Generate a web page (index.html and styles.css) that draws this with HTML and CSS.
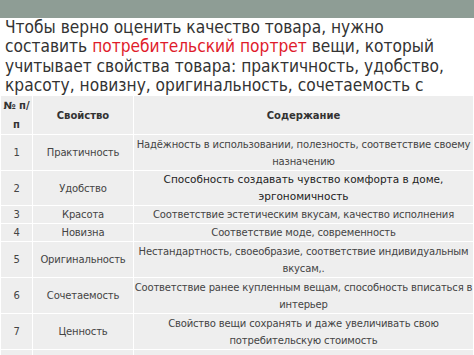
FILE: index.html
```html
<!DOCTYPE html>
<html lang="ru">
<head>
<meta charset="utf-8">
<link rel="stylesheet" href="styles.css">
</head>
<body>
<div class="topbar"></div>
<p class="intro">Чтобы верно оценить качество товара, нужно составить <span class="hl">потребительский портрет</span> вещи, который учитывает свойства товара: практичность, удобство, красоту, новизну, оригинальность, сочетаемость с</p>
<table class="props">
  <colgroup><col class="c1"><col class="c2"><col class="c3"></colgroup>
  <tr class="h37"><th class="num">№ п/ п</th><th>Свойство</th><th>Содержание</th></tr>
  <tr class="h36"><td>1</td><td>Практичность</td><td class="top">Надёжность в использовании, полезность, соответствие своему назначению</td></tr>
  <tr class="h35"><td>2</td><td>Удобство</td><td class="top dark">Способность создавать чувство комфорта в доме, эргономичность</td></tr>
  <tr class="h17"><td>3</td><td>Красота</td><td>Соответствие эстетическим вкусам, качество исполнения</td></tr>
  <tr class="h16"><td>4</td><td>Новизна</td><td>Соответствие моде, современность</td></tr>
  <tr class="h35"><td>5</td><td>Оригинальность</td><td class="top">Нестандартность, своеобразие, соответствие индивидуальным вкусам,.</td></tr>
  <tr class="h36"><td>6</td><td>Сочетаемость</td><td class="top">Соответствие ранее купленным вещам, способность вписаться в интерьер</td></tr>
  <tr class="h35"><td>7</td><td>Ценность</td><td class="top">Свойство вещи сохранять и даже увеличивать свою потребительскую стоимость</td></tr>
  <tr class="h35"><td>8</td><td>Качество</td><td class="top">Сохранять всех свойств покупки</td></tr>
</table>
</body>
</html>
```
FILE: styles.css
```css
html, body {
  margin: 0;
  padding: 0;
  background: #ffffff;
  overflow: hidden;
}
body {
  width: 474px;
  height: 355px;
  font-family: "DejaVu Sans Condensed", "DejaVu Sans", sans-serif;
}
.topbar {
  height: 18px;
  background: #8e9d95;
}
.intro {
  margin: 0;
  padding: 0 4px 0 5px;
  font-size: 17.2px;
  line-height: 19.25px;
  color: #333333;
  height: 77px;
  overflow: hidden;
}
.hl {
  color: #e01b2b;
}
.props {
  width: 474px;
  table-layout: fixed;
  border-collapse: collapse;
  background: #eeeeee;
  font-family: "DejaVu Sans", sans-serif;
  font-size: 10px;
  letter-spacing: -0.15px;
  color: #444444;
}
.c1 { width: 32px; }
.c2 { width: 101px; }
.props th, .props td {
  border: 1px solid #ffffff;
  padding: 0;
  text-align: center;
  vertical-align: middle;
  line-height: 17px;
}
.props th {
  font-weight: bold;
  color: #333333;
  letter-spacing: 0;
}
.props th.num {
  line-height: 19px;
  vertical-align: top;
}
.h37 { height: 37px; }
.h36 { height: 36px; }
.h35 { height: 35px; }
.h17 { height: 17px; }
.h16 { height: 16px; }
.props td.top { vertical-align: top; padding-top: 1px; }
.props td.dark {
  color: #222222;
  font-size: 10.5px;
  letter-spacing: 0;
  padding-top: 0;
}
```
